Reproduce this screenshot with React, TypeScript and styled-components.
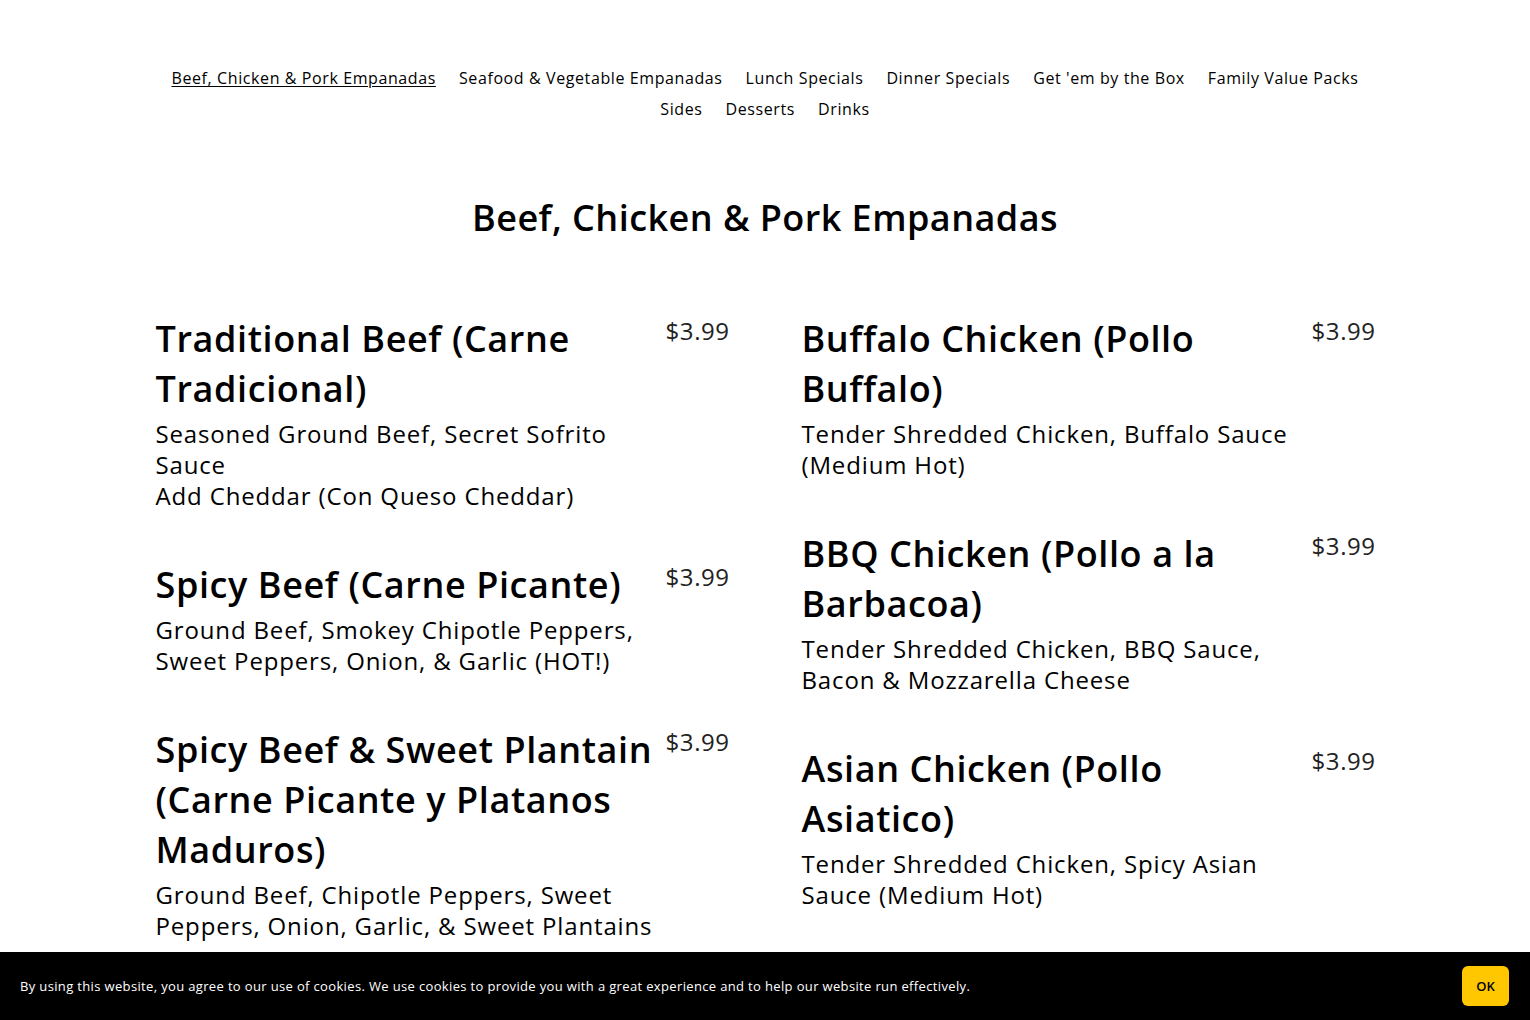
import { createGlobalStyle } from "styled-components";
import styled from "styled-components";

interface menuItem {
  name: string;
  desc: Array<string>;
  price: string;
}

const categories: Array<string> = [
  "Beef, Chicken & Pork Empanadas",
  "Seafood & Vegetable Empanadas",
  "Lunch Specials",
  "Dinner Specials",
  "Get 'em by the Box",
  "Family Value Packs",
  "Sides",
  "Desserts",
  "Drinks",
];

const leftItems: Array<menuItem> = [
  {
    name: "Traditional Beef (Carne Tradicional)",
    desc: ["Seasoned Ground Beef, Secret Sofrito Sauce", "Add Cheddar (Con Queso Cheddar)"],
    price: "$3.99",
  },
  {
    name: "Spicy Beef (Carne Picante)",
    desc: ["Ground Beef, Smokey Chipotle Peppers, Sweet Peppers, Onion, & Garlic (HOT!)"],
    price: "$3.99",
  },
  {
    name: "Spicy Beef & Sweet Plantain (Carne Picante y Platanos Maduros)",
    desc: ["Ground Beef, Chipotle Peppers, Sweet Peppers, Onion, Garlic, & Sweet Plantains"],
    price: "$3.99",
  },
];

const rightItems: Array<menuItem> = [
  {
    name: "Buffalo Chicken (Pollo Buffalo)",
    desc: ["Tender Shredded Chicken, Buffalo Sauce (Medium Hot)"],
    price: "$3.99",
  },
  {
    name: "BBQ Chicken (Pollo a la Barbacoa)",
    desc: ["Tender Shredded Chicken, BBQ Sauce, Bacon & Mozzarella Cheese"],
    price: "$3.99",
  },
  {
    name: "Asian Chicken (Pollo Asiatico)",
    desc: ["Tender Shredded Chicken, Spicy Asian Sauce (Medium Hot)"],
    price: "$3.99",
  },
];

const Item = ({ item }: { item: menuItem }) => (
  <ItemRow>
    <ItemText>
      <ItemName>{item.name}</ItemName>
      <ItemDesc>
        {item.desc.map((line) => (
          <p key={line}>{line}</p>
        ))}
      </ItemDesc>
    </ItemText>
    <Price>{item.price}</Price>
  </ItemRow>
);

const App = () => {
  return (
    <>
      <GlobalStyle />
      <Page>
        <Nav>
          {categories.map((cat, i) => (
            <NavLink key={cat} active={i === 0}>
              {cat}
            </NavLink>
          ))}
        </Nav>
        <Heading>Beef, Chicken &amp; Pork Empanadas</Heading>
        <Menu>
          <Column>
            {leftItems.map((item) => (
              <Item key={item.name} item={item} />
            ))}
          </Column>
          <Column>
            {rightItems.map((item) => (
              <Item key={item.name} item={item} />
            ))}
          </Column>
        </Menu>
      </Page>
      <CookieBar>
        <CookieText>
          By using this website, you agree to our use of cookies. We use cookies to provide you with a great
          experience and to help our website run effectively.
        </CookieText>
        <OkButton>OK</OkButton>
      </CookieBar>
    </>
  );
};

const GlobalStyle = createGlobalStyle`
  body {
    margin: 0;
    background: #ffffff;
    color: #000000;
    font-family: "Open Sans", "DejaVu Sans", sans-serif;
  }
  p {
    margin: 0;
  }
`;

const Page = styled.div`
  padding: 63px 0 120px;
`;

const Nav = styled.nav`
  display: flex;
  flex-wrap: wrap;
  justify-content: center;
  column-gap: 23px;
  max-width: 1220px;
  margin: 0 auto;
  font-size: 16px;
  line-height: 31px;
  letter-spacing: 0.6px;
`;

const NavLink = styled.a<{ active: boolean }>`
  color: #000;
  text-decoration: ${(props) => (props.active ? "underline" : "none")};
  text-underline-offset: 2px;
  cursor: pointer;
`;

const Heading = styled.h1`
  margin: 68px 0 0;
  text-align: center;
  font-size: 36px;
  font-weight: 600;
  line-height: 50px;
  letter-spacing: 0.45px;
`;

const Menu = styled.div`
  display: grid;
  grid-template-columns: 1fr 1fr;
  column-gap: 73px;
  width: 1219px;
  margin: 71px auto 0;
`;

const Column = styled.div`
  display: flex;
  flex-direction: column;
  gap: 49px;
`;

const ItemRow = styled.div`
  display: flex;
  align-items: flex-start;
  gap: 8px;
`;

const ItemText = styled.div`
  flex: 1;
  min-width: 0;
`;

const ItemName = styled.h2`
  margin: 0;
  font-size: 36px;
  font-weight: 600;
  line-height: 50px;
  letter-spacing: 0.6px;
`;

const ItemDesc = styled.div`
  margin-top: 4px;
  font-size: 24px;
  line-height: 31px;
  letter-spacing: 0.85px;
`;

const Price = styled.div`
  flex-shrink: 0;
  width: 63px;
  padding-top: 1px;
  font-size: 24px;
  line-height: 31px;
  letter-spacing: 0.6px;
  color: #222;
  text-align: right;
`;

const CookieBar = styled.div`
  position: fixed;
  left: 0;
  right: 0;
  bottom: 0;
  height: 68px;
  display: flex;
  align-items: center;
  justify-content: space-between;
  padding: 0 21px 0 20px;
  background: #000;
  color: #fff;
`;

const CookieText = styled.p`
  font-size: 13px;
  letter-spacing: 0.35px;
`;

const OkButton = styled.button`
  width: 47px;
  height: 40px;
  border: none;
  border-radius: 6px;
  background: #ffc700;
  color: #000;
  font-family: inherit;
  font-size: 13px;
  font-weight: 600;
`;

export default App;
